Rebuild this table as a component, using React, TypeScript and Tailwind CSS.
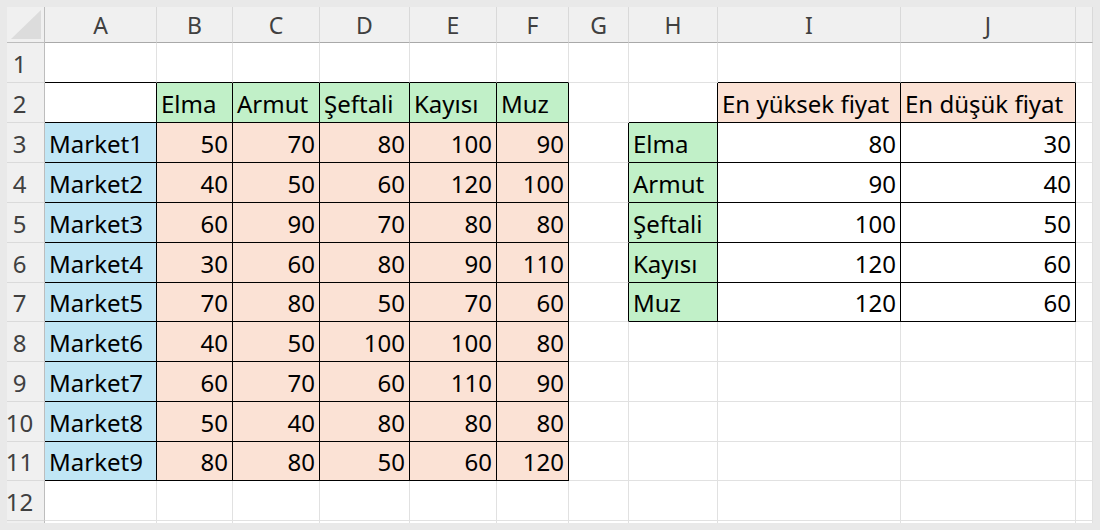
const GREEN = 'bg-[#c1f0c8]';
const PEACH = 'bg-[#fbe2d5]';
const BLUE = 'bg-[#c0e6f5]';

const colLetters = ['A', 'B', 'C', 'D', 'E', 'F', 'G', 'H', 'I', 'J', ''];

const fruits = ['Elma', 'Armut', 'Şeftali', 'Kayısı', 'Muz'];

const prices = [
  [50, 70, 80, 100, 90],
  [40, 50, 60, 120, 100],
  [60, 90, 70, 80, 80],
  [30, 60, 80, 90, 110],
  [70, 80, 50, 70, 60],
  [40, 50, 100, 100, 80],
  [60, 70, 60, 110, 90],
  [50, 40, 80, 80, 80],
  [80, 80, 50, 60, 120],
];

const maxPrices = [80, 90, 100, 120, 120];
const minPrices = [30, 40, 50, 60, 60];

type Cell = { text?: string | number; bg?: string; align?: 'left' | 'right' };

// columns: 0=A ... 9=J, 10=K
const inTable = (r: number, c: number) => {
  if (r >= 2 && r <= 11 && c >= 0 && c <= 5) return true;
  if (r === 2 && (c === 8 || c === 9)) return true;
  if (r >= 3 && r <= 7 && c >= 7 && c <= 9) return true;
  return false;
};

const getCell = (r: number, c: number): Cell => {
  if (r === 2) {
    if (c >= 1 && c <= 5) return { text: fruits[c - 1], bg: GREEN };
    if (c === 8) return { text: 'En yüksek fiyat', bg: PEACH };
    if (c === 9) return { text: 'En düşük fiyat', bg: PEACH };
  }
  if (r >= 3 && r <= 11) {
    if (c === 0) return { text: `Market${r - 2}`, bg: BLUE };
    if (c >= 1 && c <= 5) return { text: prices[r - 3][c - 1], bg: PEACH, align: 'right' };
  }
  if (r >= 3 && r <= 7) {
    if (c === 7) return { text: fruits[r - 3], bg: GREEN };
    if (c === 8) return { text: maxPrices[r - 3], align: 'right' };
    if (c === 9) return { text: minPrices[r - 3], align: 'right' };
  }
  return {};
};

// row 13 only peeks in at the bottom edge, so it has no label
const rows = [1, 2, 3, 4, 5, 6, 7, 8, 9, 10, 11, 12, 13];

const App = () => {
  return (
    <div className="w-[1100px] h-[530px] bg-[#e9e9e9] pt-[7px] pl-[7px] overflow-hidden font-['Noto_Sans',sans-serif]">
      <div className="w-[1086px] h-[516px] bg-white overflow-hidden grid grid-cols-[38px_112px_76px_87px_90px_87px_72px_60px_89px_183px_175px_17px] grid-rows-[36px_40px_40px_40px_40px_40px_40px_39px_40px_40px_40px_39px_40px_40px] text-[24px] leading-none">
        {/* header row */}
        <div className="bg-[#f0f0f0] border-r border-b border-[#bdbdbd] flex items-end justify-end pr-[3px] pb-[3px]">
          <svg width="30" height="29" viewBox="0 0 30 29">
            <polygon points="30,0 30,29 0,29" fill="#dcdcdc" />
          </svg>
        </div>
        {colLetters.map((l, i) => (
          <div
            key={l + i}
            className="bg-[#f0f0f0] border-r border-[#d9d9d9] border-b border-b-[#a9a9a9] flex items-center justify-center text-[#404040] text-[23px] pt-[2px]"
          >
            {l}
          </div>
        ))}

        {rows.map((r) => (
          <RowCells key={r} r={r} />
        ))}
      </div>
    </div>
  );
};

const RowCells = ({ r }: { r: number }) => {
  return (
    <>
      <div className="bg-[#f0f0f0] border-r border-r-[#bdbdbd] border-b border-b-[#dadada] flex items-center justify-center pr-[12px] text-[#404040] pt-[2px]">
        {r < 13 ? r : ''}
      </div>
      {colLetters.map((_, c) => {
        const cell = getCell(r, c);
        const rightBlack = inTable(r, c) || inTable(r, c + 1);
        const bottomBlack = inTable(r, c) || inTable(r + 1, c);
        return (
          <div
            key={c}
            className={[
              'flex items-center px-[4px] pt-[2px] whitespace-nowrap text-black',
              cell.bg ?? 'bg-white',
              cell.align === 'right' ? 'justify-end' : 'justify-start',
              'border-r border-b',
              rightBlack ? 'border-r-black' : 'border-r-[#e1e1e1]',
              bottomBlack ? 'border-b-black' : 'border-b-[#e1e1e1]',
            ].join(' ')}
          >
            {cell.text}
          </div>
        );
      })}
    </>
  );
};

export default App;
